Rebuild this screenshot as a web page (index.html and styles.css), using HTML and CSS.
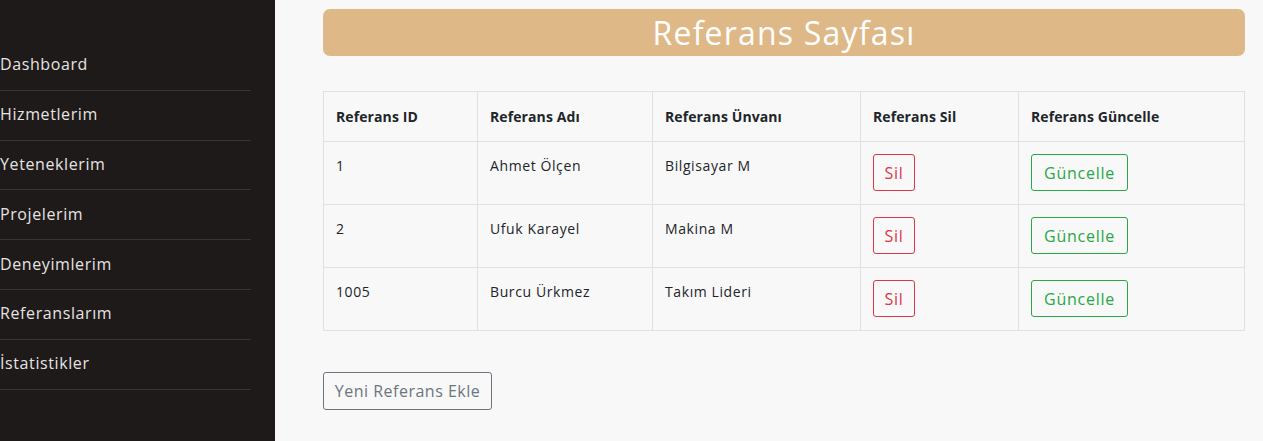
FILE: index.html
```html
<!DOCTYPE html>
<html lang="tr">
<head>
<meta charset="utf-8">
<title>Referans Sayfası</title>
<link rel="stylesheet" href="styles.css">
</head>
<body>
<div class="layout">
  <aside class="sidebar">
    <ul class="nav">
      <li><a href="#">Dashboard</a></li>
      <li><a href="#">Hizmetlerim</a></li>
      <li><a href="#">Yeteneklerim</a></li>
      <li><a href="#">Projelerim</a></li>
      <li><a href="#">Deneyimlerim</a></li>
      <li><a href="#">Referanslarım</a></li>
      <li><a href="#">İstatistikler</a></li>
    </ul>
  </aside>
  <main class="main">
    <h1 class="banner">Referans Sayfası</h1>
    <table class="ref-table">
      <thead>
        <tr>
          <th class="c1">Referans ID</th>
          <th class="c2">Referans Adı</th>
          <th class="c3">Referans Ünvanı</th>
          <th class="c4">Referans Sil</th>
          <th class="c5">Referans Güncelle</th>
        </tr>
      </thead>
      <tbody>
        <tr>
          <td>1</td>
          <td>Ahmet Ölçen</td>
          <td>Bilgisayar M</td>
          <td><a class="btn btn-red" href="#">Sil</a></td>
          <td><a class="btn btn-green" href="#">Güncelle</a></td>
        </tr>
        <tr>
          <td>2</td>
          <td>Ufuk Karayel</td>
          <td>Makina M</td>
          <td><a class="btn btn-red" href="#">Sil</a></td>
          <td><a class="btn btn-green" href="#">Güncelle</a></td>
        </tr>
        <tr>
          <td>1005</td>
          <td>Burcu Ürkmez</td>
          <td>Takım Lideri</td>
          <td><a class="btn btn-red" href="#">Sil</a></td>
          <td><a class="btn btn-green" href="#">Güncelle</a></td>
        </tr>
      </tbody>
    </table>
    <div class="actions">
      <a class="btn btn-gray" href="#">Yeni Referans Ekle</a>
    </div>
  </main>
</div>
</body>
</html>
```

FILE: styles.css
```css
* { box-sizing: border-box; }
html, body { margin: 0; padding: 0; height: 100%; }
body {
  font-family: "Open Sans", "DejaVu Sans", sans-serif;
  background: #f8f8f9;
  color: #212529;
}
.layout {
  display: flex;
  min-height: 441px;
}
.sidebar {
  width: 275px;
  flex: 0 0 275px;
  background: #1e1a19;
  padding-top: 41px;
}
.nav {
  list-style: none;
  margin: 0;
  padding: 0;
  width: 251px;
}
.nav li {
  border-bottom: 1px solid #3a3534;
}
.nav a {
  display: flex;
  align-items: center;
  height: 48.8px;
  padding-bottom: 2px;
  color: #e6e3e1;
  text-decoration: none;
  font-size: 16px;
  letter-spacing: 0.6px;
}
.main {
  flex: 1;
  padding: 9px 18px 0 48px;
}
.banner {
  margin: 0;
  height: 47px;
  background: #dfb887;
  border-radius: 7px;
  color: #fff;
  font-weight: 400;
  font-size: 32px;
  letter-spacing: 1.2px;
  display: flex;
  align-items: center;
  justify-content: center;
}
.ref-table {
  margin-top: 35px;
  width: 100%;
  border-collapse: collapse;
  font-size: 14px;
  letter-spacing: 0.6px;
}
.ref-table th, .ref-table td {
  border: 1px solid #dee2e6;
  text-align: left;
  vertical-align: top;
  padding: 0 12px;
}
.ref-table th {
  height: 50px;
  vertical-align: middle;
  font-weight: 700;
  letter-spacing: 0.1px;
  color: #212529;
}
.ref-table td {
  height: 63px;
  padding-top: 14px;
}
.c1 { width: 154px; }
.c2 { width: 175px; }
.c3 { width: 208px; }
.c4 { width: 158px; }
.btn {
  display: inline-flex;
  align-items: center;
  justify-content: center;
  height: 37px;
  border: 1px solid;
  border-radius: 3px;
  text-decoration: none;
  font-size: 16px;
  letter-spacing: 0.75px;
  background: transparent;
}
.ref-table td .btn { margin-top: -2px; }
.btn-red {
  color: #dc3545;
  border-color: #dc3545;
  width: 42px;
}
.btn-green {
  color: #28a745;
  border-color: #28a745;
  width: 97px;
}
.actions {
  margin-top: 41px;
}
.btn-gray {
  color: #6c757d;
  border-color: #6c757d;
  width: 169px;
  height: 38px;
  letter-spacing: 0.5px;
}
```
